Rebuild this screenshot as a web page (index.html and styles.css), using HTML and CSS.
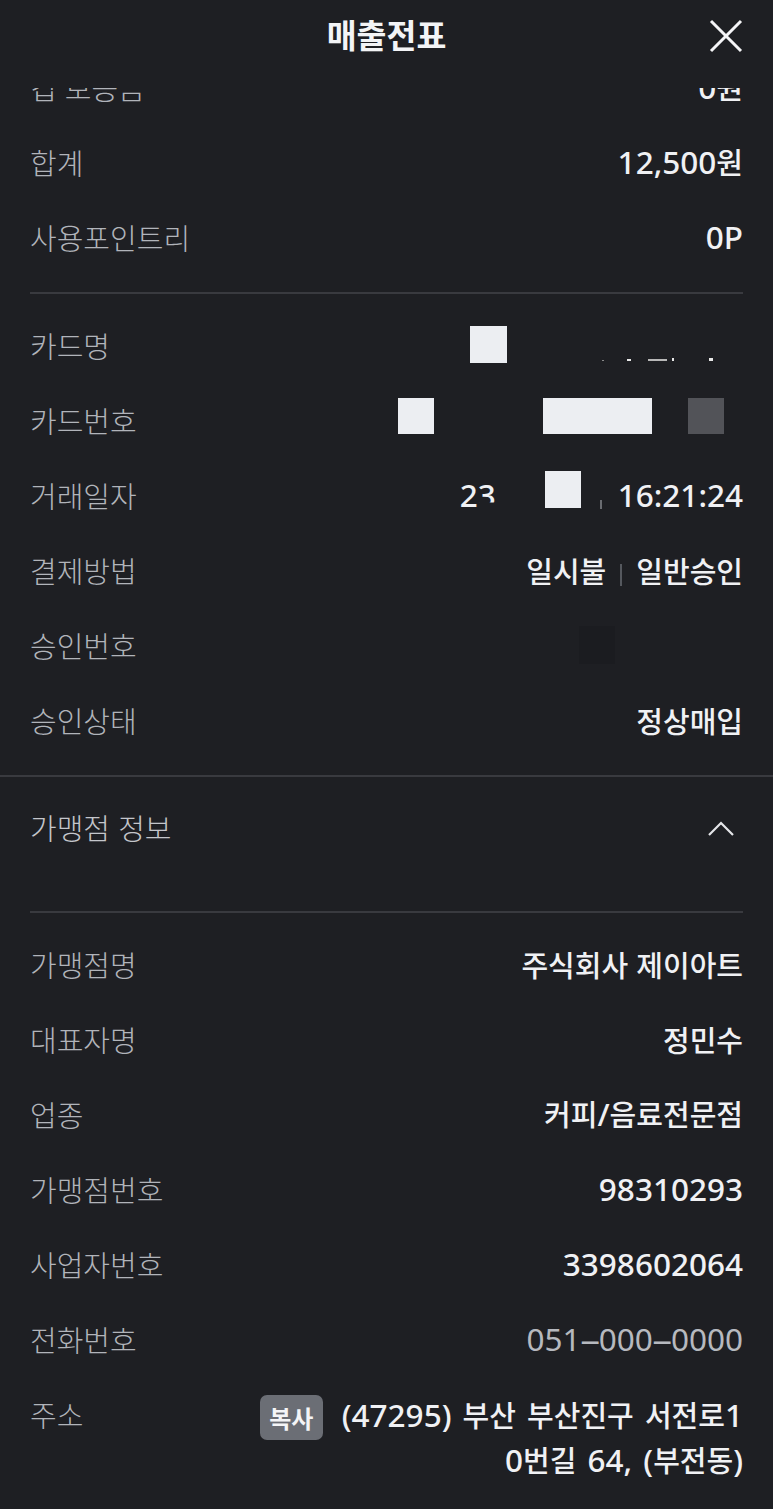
FILE: index.html
```html
<!DOCTYPE html>
<html lang="ko">
<head>
<meta charset="utf-8">
<title>매출전표</title>
<link rel="stylesheet" href="styles.css">
</head>
<body>
<div class="screen">
  <header class="topbar">
    <span class="spacer"></span>
    <h1 class="title">매출전표</h1>
    <button class="close" aria-label="닫기">
      <svg viewBox="0 0 34 34" width="34" height="34"><path d="M2 2 L32 32 M32 2 L2 32"/></svg>
    </button>
  </header>

  <main class="content">
    <section class="group first">
      <div class="row"><span class="k">컵 보증금</span><span class="v"><span class="n">0</span>원</span></div>
      <div class="row"><span class="k">합계</span><span class="v"><span class="n">12,500</span>원</span></div>
      <div class="row"><span class="k">사용포인트리</span><span class="v"><span class="n">0P</span></span></div>
    </section>
    <hr class="rule">

    <section class="group">
      <div class="row"><span class="k">카드명</span>
        <span class="v redact">
          <i class="sq"></i>
          <span class="marks"><i class="mk m1"></i><i class="mk m2"></i><i class="mk m3"></i><i class="mk m4"></i><i class="mk m5"></i></span>
        </span>
      </div>
      <div class="row"><span class="k">카드번호</span>
        <span class="v redact cardno"><i class="sq"></i><i class="sq wide"></i><i class="sq gray"></i></span>
      </div>
      <div class="row"><span class="k">거래일자</span>
        <span class="v redact date"><span class="n">2<span class="clip">3</span></span><i class="sq"></i><i class="tick"></i><span class="n time">16:21:24</span></span>
      </div>
      <div class="row"><span class="k">결제방법</span><span class="v pay">일시불<i class="bar"></i>일반승인</span></div>
      <div class="row"><span class="k">승인번호</span><span class="v redact"><i class="ghost"></i></span></div>
      <div class="row"><span class="k">승인상태</span><span class="v">정상매입</span></div>
    </section>
    <hr class="rule full">

    <div class="acc-head">
      <span class="k">가맹점 정보</span>
      <svg class="chev" viewBox="0 0 28 16" width="28" height="16"><polyline points="2,14 14,2 26,14"/></svg>
    </div>
    <hr class="rule">

    <section class="group">
      <div class="row"><span class="k">가맹점명</span><span class="v">주식회사 제이아트</span></div>
      <div class="row"><span class="k">대표자명</span><span class="v">정민수</span></div>
      <div class="row"><span class="k">업종</span><span class="v">커피<span class="n">/</span>음료전문점</span></div>
      <div class="row"><span class="k">가맹점번호</span><span class="v"><span class="n">98310293</span></span></div>
      <div class="row"><span class="k">사업자번호</span><span class="v"><span class="n">3398602064</span></span></div>
      <div class="row"><span class="k">전화번호</span><span class="v light"><span class="n">051<span class="dash">-</span>000<span class="dash">-</span>0000</span></span></div>
      <div class="row addr"><span class="k">주소</span>
        <div class="addr-val">
          <button class="copy">복사</button>
          <div class="addr-text">
            <span class="line"><span class="n">(47295)</span> 부산 부산진구 서전로<span class="n">1</span></span>
            <span class="line"><span class="n">0</span>번길 <span class="n">64,</span> <span class="n">(</span>부전동<span class="n">)</span></span>
          </div>
        </div>
      </div>
    </section>
  </main>
</div>
</body>
</html>
```

FILE: styles.css
```css
html, body {
  margin: 0;
  padding: 0;
  background: #1e1f23;
}

body {
  font-family: "Noto Sans CJK KR", "Noto Sans", sans-serif;
  color: #f0f1f4;
}

.screen {
  position: relative;
  width: 773px;
  height: 1509px;
  overflow: hidden;
  background: #1e1f23;
}

/* header */
.topbar {
  position: absolute;
  top: 0;
  left: 0;
  right: 0;
  z-index: 2;
  height: 88px;
  padding: 0 30px 17px;
  box-sizing: border-box;
  display: grid;
  grid-template-columns: 1fr auto 1fr;
  align-items: center;
  background: #1e1f23;
}

.title {
  margin: 0 0 3px;
  font-size: 32.5px;
  font-weight: 700;
  color: #f3f4f6;
  line-height: 1;
}

.close {
  justify-self: end;
  margin: 0;
  padding: 0;
  border: 0;
  background: none;
  width: 34px;
  height: 34px;
  display: flex;
}

.close svg path {
  stroke: #f5f5f7;
  stroke-width: 3;
  fill: none;
}

/* content */
.content {
  display: flex;
  flex-direction: column;
}

.group {
  display: flex;
  flex-direction: column;
  padding: 13px 0 18px;
}

.group.first {
  padding-top: 49px;
}

.rule {
  margin: 0 30px;
  border: 0;
  height: 2px;
  background: #393a3f;
}

.rule.full {
  margin: 0;
}

.row {
  height: 75px;
  padding: 0 30px;
  display: flex;
  align-items: center;
  justify-content: space-between;
  line-height: 44px;
}

.k {
  font-size: 29px;
  font-weight: 300;
  color: #b1b4ba;
  white-space: nowrap;
}

.v {
  font-size: 29px;
  font-weight: 500;
  color: #f0f1f4;
  white-space: nowrap;
  text-align: right;
}

.n {
  font-family: "Noto Sans", "Noto Sans CJK KR", sans-serif;
  font-size: 31.5px;
}

.v.light {
  font-weight: 400;
  color: #b6b9bf;
}

.dash {
  display: inline-block;
  margin: 0 4px;
  transform: scaleX(2.2);
}

/* redacted blocks */
.redact {
  display: flex;
  align-items: center;
}

.sq {
  display: block;
  width: 37px;
  height: 37px;
  background: #eceef2;
}

.marks {
  display: flex;
  align-items: flex-end;
  width: 236px;
  height: 37px;
  padding-bottom: 2px;
  box-sizing: border-box;
}

.mk {
  display: block;
  background: #e8e8e8;
}

.m1 { margin-left: 95px; width: 2px; height: 1px; background: #8a8a8a; }
.m2 { margin-left: 23px; width: 4px; height: 2px; }
.m3 { margin-left: 17px; width: 19px; height: 2px; background: #b8b8b8; }
.m4 { margin-left: 5px; width: 2px; height: 3px; }
.m5 { margin-left: 35px; width: 4px; height: 3px; }

.cardno {
  padding-right: 19px;
  margin-bottom: 7px;
}

.cardno .sq {
  width: 36px;
  height: 36px;
}

.cardno .wide {
  margin-left: 109px;
  width: 109px;
}

.cardno .gray {
  margin-left: 36px;
  background: #525358;
}

.date .clip {
  display: inline-block;
  line-height: 43px;
  clip-path: inset(0 0 13px 0);
}

.date .sq {
  margin-left: 49px;
  width: 36px;
  margin-bottom: 11px;
}

.tick {
  display: block;
  margin-left: 19px;
  width: 2px;
  height: 9px;
  margin-top: 20px;
  background: #6a6c71;
}

.time {
  margin-left: 16px;
}

.pay .bar {
  display: inline-block;
  width: 2px;
  height: 22px;
  margin: 0 14px;
  background: #55585e;
  vertical-align: -3px;
}

.ghost {
  display: block;
  width: 36px;
  height: 38px;
  margin-right: 128px;
  background: #1b1c20;
}

/* accordion header */
.acc-head {
  height: 75px;
  margin: 12px 0 47px;
  padding: 0 38px 0 30px;
  display: flex;
  align-items: center;
  justify-content: space-between;
}

.acc-head .k {
  color: #c4c6cb;
}

.chev {
  margin-top: 4px;
}

.chev polyline {
  fill: none;
  stroke: #e4e5e8;
  stroke-width: 2.2;
}

/* address */
.row.addr {
  height: auto;
  padding-top: 15.5px;
  padding-bottom: 15.5px;
  align-items: flex-start;
}

.addr-val {
  display: flex;
  align-items: flex-start;
  gap: 19px;
}

.copy {
  margin: 3px 0 0;
  padding: 0;
  border: 0;
  width: 63px;
  height: 45px;
  border-radius: 7px;
  background: #6b6e75;
  color: #f4f5f7;
  font-family: "Noto Sans CJK KR", sans-serif;
  font-size: 24px;
  font-weight: 700;
  line-height: 45px;
}

.addr-text {
  display: flex;
  flex-direction: column;
  align-items: flex-end;
  font-size: 29px;
  font-weight: 500;
  color: #f0f1f4;
  line-height: 44px;
  white-space: nowrap;
  word-spacing: 3px;
}

.line {
  display: block;
}
```
